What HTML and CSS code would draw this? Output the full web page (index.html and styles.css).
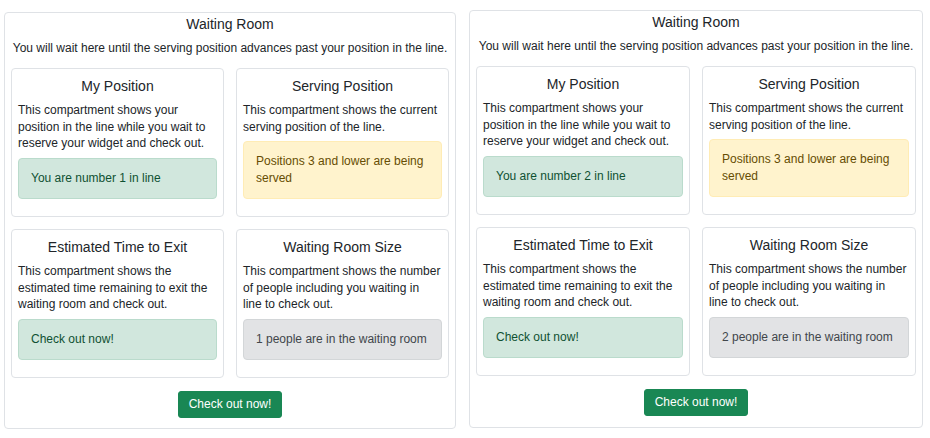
FILE: index.html
```html
<!DOCTYPE html>
<html lang="en">
<head>
<meta charset="utf-8">
<title>Waiting Room</title>
<link rel="stylesheet" href="styles.css">
</head>
<body>
<div class="wrap">
  <section class="panel panel-left">
    <h1 class="panel-title">Waiting Room</h1>
    <p class="panel-sub">You will wait here until the serving position advances past your position in the line.</p>
    <div class="grid">
      <div class="card">
        <h2 class="card-title">My Position</h2>
        <p class="card-text">This compartment shows your position in the line while you wait to reserve your widget and check out.</p>
        <div class="alert alert-success">You are number 1 in line</div>
      </div>
      <div class="card">
        <h2 class="card-title">Serving Position</h2>
        <p class="card-text">This compartment shows the current serving position of the line.</p>
        <div class="alert alert-warning">Positions 3 and lower are being served</div>
      </div>
      <div class="card">
        <h2 class="card-title">Estimated Time to Exit</h2>
        <p class="card-text">This compartment shows the estimated time remaining to exit the waiting room and check out.</p>
        <div class="alert alert-success">Check out now!</div>
      </div>
      <div class="card">
        <h2 class="card-title">Waiting Room Size</h2>
        <p class="card-text">This compartment shows the number of people including you waiting in line&nbsp;to check out.</p>
        <div class="alert alert-secondary">1 people are in the waiting room</div>
      </div>
    </div>
    <div class="actions"><button class="btn" type="button">Check out now!</button></div>
  </section>

  <section class="panel panel-right">
    <h1 class="panel-title">Waiting Room</h1>
    <p class="panel-sub">You will wait here until the serving position advances past your position in the line.</p>
    <div class="grid">
      <div class="card">
        <h2 class="card-title">My Position</h2>
        <p class="card-text">This compartment shows your position in the line while you wait to reserve your widget and check out.</p>
        <div class="alert alert-success">You are number 2 in line</div>
      </div>
      <div class="card">
        <h2 class="card-title">Serving Position</h2>
        <p class="card-text">This compartment shows the current serving position of the line.</p>
        <div class="alert alert-warning">Positions 3 and lower are being served</div>
      </div>
      <div class="card">
        <h2 class="card-title">Estimated Time to Exit</h2>
        <p class="card-text">This compartment shows the estimated time remaining to exit the waiting room and check out.</p>
        <div class="alert alert-success">Check out now!</div>
      </div>
      <div class="card">
        <h2 class="card-title">Waiting Room Size</h2>
        <p class="card-text">This compartment shows the number of people including you waiting in line&nbsp;to check out.</p>
        <div class="alert alert-secondary">2 people are in the waiting room</div>
      </div>
    </div>
    <div class="actions"><button class="btn" type="button">Check out now!</button></div>
  </section>
</div>
</body>
</html>
```
FILE: styles.css
```css
* { box-sizing: border-box; }

html, body {
  margin: 0;
  padding: 0;
  background: #ffffff;
}

body {
  font-family: "Liberation Sans", Arial, sans-serif;
  font-size: 12px;
  line-height: 16.8px;
  color: #212529;
}

.wrap {
  display: flex;
  align-items: flex-start;
  padding-left: 4px;
}

.panel {
  border: 1px solid #dfe2e6;
  border-radius: 4px;
  padding: 3px 6px 10px;
}

.panel-left {
  width: 452px;
  margin-top: 12px;
}

.panel-right {
  width: 454px;
  margin-top: 10px;
  margin-left: 13px;
  padding-bottom: 11px;
}

.panel-title {
  margin: 0;
  font-size: 14px;
  line-height: 16.8px;
  font-weight: 400;
  text-align: center;
}

.panel-sub {
  margin: 7px 0 0;
  text-align: center;
  white-space: nowrap;
}

.grid {
  display: grid;
  grid-template-columns: 1fr 1fr;
  gap: 12px;
  margin-top: 11.5px;
}

.card {
  border: 1px solid #dfe2e6;
  border-radius: 4px;
  padding: 6px;
}

.card-title {
  margin: 3px 0 7px;
  font-size: 14px;
  line-height: 16.8px;
  font-weight: 400;
  text-align: center;
}

.card-text {
  margin: 0 0 6px;
}

.alert {
  border: 1px solid transparent;
  border-radius: 4px;
  padding: 11px 12px;
  margin-bottom: 11px;
}

.alert-success {
  background: #d1e7dd;
  border-color: #badbcc;
  color: #0f5132;
}

.alert-warning {
  background: #fff3cd;
  border-color: #ffecb5;
  color: #664d03;
}

.alert-secondary {
  background: #e2e3e5;
  border-color: #d3d6d8;
  color: #41464b;
}

.actions {
  display: flex;
  justify-content: center;
  margin-top: 13px;
}

.btn {
  font-family: inherit;
  font-size: 12px;
  line-height: 16.8px;
  color: #ffffff;
  background: #198754;
  border: 1px solid #198754;
  border-radius: 3px;
  padding: 4px 9.5px;
  cursor: pointer;
}
```
